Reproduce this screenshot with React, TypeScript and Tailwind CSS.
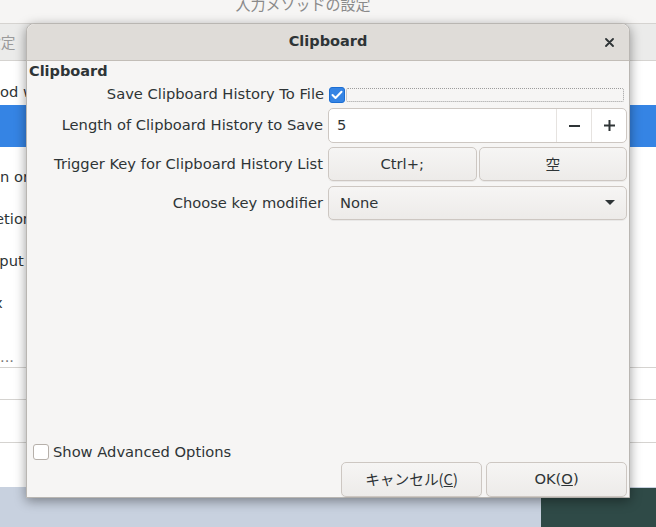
import React from "react";

const font = { fontFamily: '"DejaVu Sans", "Noto Sans CJK JP", sans-serif' };
const jp = { fontFamily: '"Noto Sans CJK JP", sans-serif' };

function Btn({ children, className = "" }: { children: React.ReactNode; className?: string }) {
  return (
    <div
      className={
        "flex items-center justify-center rounded-[5px] border border-[#cdc7c2] bg-gradient-to-b from-[#f6f5f4] to-[#edebe9] text-[14.7px] text-[#2e3436] shadow-[0_1px_0_rgba(0,0,0,0.05)] " +
        className
      }
    >
      {children}
    </div>
  );
}

export default function App() {
  return (
    <div className="relative w-[656px] h-[527px] overflow-hidden bg-[#c8d1df]" style={font}>
      {/* desktop teal panel */}
      <div className="absolute left-[541px] top-[488px] w-[115px] h-[39px] bg-[#2f4a47]" />

      {/* parent window */}
      <div className="absolute left-0 top-0 w-[656px] h-[487px] bg-white flex flex-col">
        <div className="h-[23px] bg-[#f6f5f4] flex items-center justify-center text-[15px] text-[#8a8a8a]">
          <span className="ml-[-50px] mt-[-14px]" style={jp}>入力メソッドの設定</span>
        </div>
        <div className="h-[38px] bg-[#ebebea] border-t border-b border-[#d5d3d0] flex items-center text-[14.7px] text-[#9a9a9a]" style={jp}>
          <span className="ml-[-14px]">設定</span>
        </div>
        <div className="flex flex-col text-[14.7px] text-[#2e3436] leading-[18px]">
          <div className="h-[44px] pt-[22px] whitespace-nowrap">od with</div>
          <div className="h-[42px] bg-[#3584e4]" />
          <div className="h-[42px] pt-[21px] ml-[-9px] whitespace-nowrap">on or</div>
          <div className="h-[42px] pt-[21px] ml-[-5px] whitespace-nowrap">etion</div>
          <div className="h-[42px] pt-[21px] ml-[-10px] whitespace-nowrap">nput</div>
          <div className="h-[42px] pt-[21px] ml-[-6px] whitespace-nowrap">x</div>
          <div className="h-[52px] pt-[33px] text-[#777] whitespace-nowrap">...</div>
          <div className="h-[32px] border-t border-[#d5d3d0]" />
          <div className="h-[43px] border-t border-[#d5d3d0]" />
          <div className="h-[40px] border-t border-[#d5d3d0]" />
        </div>
      </div>

      {/* dialog */}
      <div className="absolute left-[26px] top-[23px] w-[604px] h-[475px] flex flex-col bg-[#f6f5f4] rounded-t-[8px] border border-[#b9b6b2] shadow-[0_3px_12px_rgba(0,0,0,0.4)] text-[#2e3436]">
        <div className="relative h-[37px] shrink-0 flex items-center justify-center bg-[#dfdcd8] border-b border-[#c2bdb7] rounded-t-[8px]">
          <span className="text-[14.5px] font-bold">Clipboard</span>
          <svg className="absolute right-[15px] top-[14px]" width="9" height="9" viewBox="0 0 9 9">
            <path d="M1 1 L8 8 M8 1 L1 8" stroke="#2e3436" strokeWidth="1.8" strokeLinecap="round" />
          </svg>
        </div>

        <div className="flex-1 flex flex-col px-[2px] pt-[1px] text-[14.7px]">
          <div className="font-bold leading-[18px] text-[14.5px]">Clipboard</div>

          <div className="flex items-center mt-[6px] h-[17px]">
            <div className="w-[295px] text-right whitespace-nowrap">Save Clipboard History To File</div>
            <div className="ml-[5px] flex items-center flex-1 gap-[1px]">
              <div className="w-[16px] h-[16px] rounded-[3px] bg-[#3584e4] border border-[#1c6ed3] flex items-center justify-center">
                <svg width="12" height="10" viewBox="0 0 12 10">
                  <path d="M1.5 5 L4.5 8 L10.5 1.8" stroke="white" strokeWidth="2" fill="none" strokeLinecap="round" strokeLinejoin="round" />
                </svg>
              </div>
              <div className="flex-1 h-[14px] border border-dotted border-[#9c9c9c] rounded-[2px] mr-[3px]" />
            </div>
          </div>

          <div className="flex items-center mt-[5px]">
            <div className="w-[295px] text-right whitespace-nowrap">Length of Clipboard History to Save</div>
            <div className="ml-[5px] w-[300px] h-[35px] flex rounded-[5px] border border-[#cdc7c2] bg-white">
              <div className="flex-1 flex items-center pl-[8px]">5</div>
              <div className="w-[35px] border-l border-[#e6e3e0] flex items-center justify-center">
                <svg width="11" height="2" viewBox="0 0 11 2"><rect width="11" height="2" fill="#2e3436" /></svg>
              </div>
              <div className="w-[35px] border-l border-[#e6e3e0] flex items-center justify-center">
                <svg width="11" height="11" viewBox="0 0 11 11"><rect y="4.5" width="11" height="2" fill="#2e3436" /><rect x="4.5" width="2" height="11" fill="#2e3436" /></svg>
              </div>
            </div>
          </div>

          <div className="flex items-center mt-[4px]">
            <div className="w-[295px] text-right whitespace-nowrap">Trigger Key for Clipboard History List</div>
            <div className="ml-[5px] w-[300px] flex gap-[2px]">
              <Btn className="flex-1 h-[34px]">Ctrl+;</Btn>
              <Btn className="flex-1 h-[34px]"><span style={jp}>空</span></Btn>
            </div>
          </div>

          <div className="flex items-center mt-[5px]">
            <div className="w-[295px] text-right whitespace-nowrap">Choose key modifier</div>
            <Btn className="ml-[5px] w-[300px] h-[34px] !justify-between px-[11px]">
              <span>None</span>
              <svg width="10" height="6" viewBox="0 0 10 6"><path d="M0 0 L10 0 L5 5 Z" fill="#2e3436" /></svg>
            </Btn>
          </div>

          <div className="flex-1" />

          <div className="flex items-center gap-[4px] pl-[4px] h-[18px]">
            <div className="w-[16px] h-[16px] rounded-[3px] border border-[#b6b0aa] bg-white" />
            <span>Show Advanced Options</span>
          </div>

          <div className="flex justify-end gap-[4px] mt-[1px] mb-[0px]">
            <Btn className="w-[141px] h-[35px]">
              <span style={jp}>キャンセル(<span className="underline">C</span>)</span>
            </Btn>
            <Btn className="w-[141px] h-[35px]">
              <span>OK(<span className="underline">O</span>)</span>
            </Btn>
          </div>
        </div>
      </div>
    </div>
  );
}
